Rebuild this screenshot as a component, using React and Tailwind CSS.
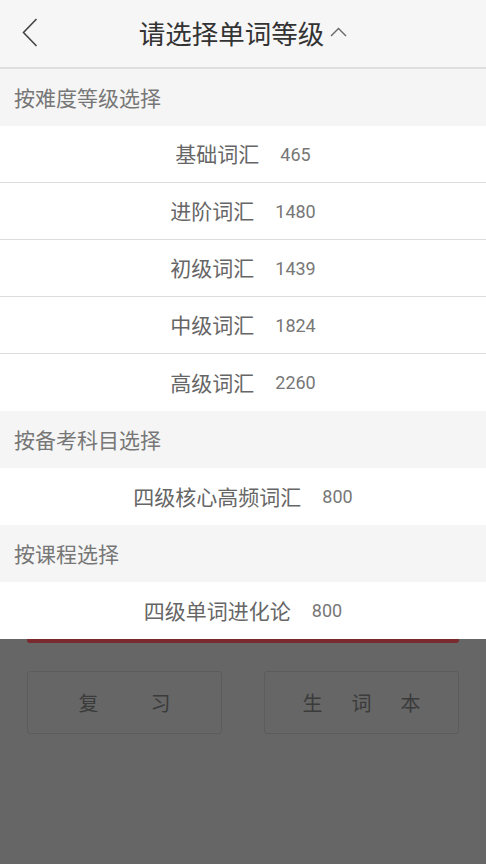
const font = { fontFamily: '"Noto Sans CJK SC", "Noto Sans", sans-serif' };

const groups = [
  {
    title: "按难度等级选择",
    items: [
      ["基础词汇", 465],
      ["进阶词汇", 1480],
      ["初级词汇", 1439],
      ["中级词汇", 1824],
      ["高级词汇", 2260],
    ],
  },
  { title: "按备考科目选择", items: [["四级核心高频词汇", 800]] },
  { title: "按课程选择", items: [["四级单词进化论", 800]] },
];

export default function App() {
  return (
    <div className="w-[486px] h-[864px] flex flex-col bg-[#666666] overflow-hidden" style={font}>
      {/* HEADER */}
      <div className="h-[69px] shrink-0 bg-[#f6f6f6] border-b-2 border-[#dedede] flex items-center relative">
        <svg className="absolute left-[22px] top-[18px] w-[16px] h-[29px]" viewBox="0 0 16 29" fill="none">
          <path d="M14.5 1 L1.5 14.5 L14.5 28" stroke="#444" strokeWidth="1.6" />
        </svg>
        <div className="flex-1 flex items-center justify-center">
          <span className="text-[26.5px] text-[#333] leading-none">请选择单词等级</span>
          <svg className="w-[17px] h-[10px] ml-[6px] -mt-[4px]" viewBox="0 0 17 10" fill="none">
            <path d="M1 9 L8.5 1.5 L16 9" stroke="#666" strokeWidth="1.4" />
          </svg>
        </div>
      </div>

      {/* LIST */}
      <div className="shrink-0">
        {groups.map((g) => (
          <div key={g.title}>
            <div className="h-[57px] bg-[#f5f5f5] flex items-center px-[14px] text-[21px] text-[#777]">
              {g.title}
            </div>
            {g.items.map(([name, count], i) => (
              <div
                key={name}
                className={`h-[57px] bg-white flex items-center justify-center gap-[21px] ${
                  i < g.items.length - 1 ? "border-b border-[#dcdcdc]" : ""
                }`}
              >
                <span className="text-[21px] text-[#666]">{name}</span>
                <span className="text-[18px] text-[#777]" style={{ fontFamily: "Roboto, sans-serif" }}>
                  {count}
                </span>
              </div>
            ))}
          </div>
        ))}
      </div>

      {/* DIMMED PAGE BELOW */}
      <div className="px-[27px]">
        <div className="h-[4px] bg-[#7a2a2e] rounded-b-[3px] w-[432px]" />
        <div className="flex justify-between mt-[28px]">
          <div className="w-[195px] h-[63px] border border-[#5c5c5c] rounded-[3px] flex items-center justify-center gap-[52px] text-[20px] text-[#3b3b3b]">
            <span>复</span>
            <span>习</span>
          </div>
          <div className="w-[195px] h-[63px] border border-[#5c5c5c] rounded-[3px] flex items-center justify-center gap-[29px] text-[20px] text-[#3b3b3b]">
            <span>生</span>
            <span>词</span>
            <span>本</span>
          </div>
        </div>
      </div>
    </div>
  );
}
